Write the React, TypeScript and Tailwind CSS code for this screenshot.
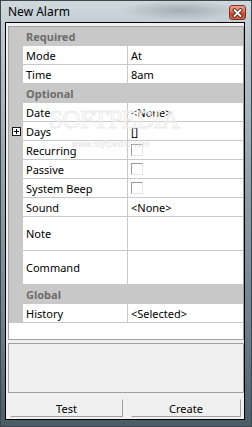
import React from "react";

function Header({ text }: { text: string }) {
  return (
    <div className="h-[19px] shrink-0 bg-[#c8c8c8] pl-[17px] flex items-center font-bold text-[#6d6d6d]">
      {text}
    </div>
  );
}

function Row({
  label,
  value,
  h = "h-[19px]",
  plus = false,
}: {
  label: string;
  value?: React.ReactNode;
  h?: string;
  plus?: boolean;
}) {
  return (
    <div className={`flex shrink-0 ${h}`}>
      <div className="w-[14px] bg-[#c8c8c8] flex items-center justify-center">
        {plus && (
          <div className="w-[9px] h-[9px] border border-[#1a1a1a] bg-white relative">
            <div className="absolute left-[1px] top-[3px] w-[5px] h-[1px] bg-black" />
            <div className="absolute left-[3px] top-[1px] w-[1px] h-[5px] bg-black" />
          </div>
        )}
      </div>
      <div className="w-[105px] border-r border-b border-[#c8c8c8] bg-white pl-[3px] flex items-center">
        {label}
      </div>
      <div className="flex-1 border-b border-[#c8c8c8] bg-white pl-[3px] flex items-center">
        {value}
      </div>
    </div>
  );
}

function Check() {
  return (
    <div className="w-[12px] h-[12px] bg-white border border-t-[#9a9a9a] border-l-[#9a9a9a] border-b-[#e6e6e6] border-r-[#e6e6e6]" />
  );
}

export default function App() {
  return (
    <div className="w-[252px] h-[427px] border border-[#3b474d] bg-[linear-gradient(180deg,#cfd8dd_0%,#bcc7ce_8%,#93a3ac_40%,#6f818b_75%,#4a5d66_100%)] flex flex-col font-['Noto_Sans',sans-serif] text-[11px] leading-[15px] text-black overflow-hidden">
      {/* Title bar */}
      <div className="h-[21px] shrink-0 flex items-start justify-between bg-[radial-gradient(ellipse_60px_10px_at_72%_45%,#a3adb3_0%,transparent_100%)]">
        <span className="ml-[7px] mt-[3px] text-[12px] leading-[16px] text-black">New Alarm</span>
        <div className="mt-[4px] mr-[5px] w-[17px] h-[15px] rounded-[3px] border border-[#7d3426] bg-[linear-gradient(180deg,#eba58f_0%,#d9735a_45%,#c4452a_55%,#d2674c_100%)] flex items-center justify-center">
          <svg width="11" height="10" viewBox="0 0 11 10">
            <path d="M2.5 2 L8.5 8 M8.5 2 L2.5 8" stroke="#4a1d14" strokeWidth="3.4" strokeLinecap="square" />
            <path d="M2.5 2 L8.5 8 M8.5 2 L2.5 8" stroke="#ffffff" strokeWidth="1.8" strokeLinecap="square" />
          </svg>
        </div>
      </div>

      {/* Client area */}
      <div className="flex-1 ml-[4px] mr-[6px] mb-[6px] border border-black bg-[#f0f0f0] flex flex-col pl-[2px] pt-[3px] pb-[2px]">
        {/* Property grid */}
        <div className="h-[314px] shrink-0 border border-[#a0a0a0] bg-white flex flex-col relative">
          <Header text="Required" />
          <Row label="Mode" value="At" />
          <Row label="Time" value="8am" />
          <Header text="Optional" />
          <Row label="Date" value="<None>" />
          <Row label="Days" value="[]" plus />
          <Row label="Recurring" value={<Check />} />
          <Row label="Passive" value={<Check />} />
          <Row label="System Beep" value={<Check />} />
          <Row label="Sound" value="<None>" />
          <Row label="Note" h="h-[34px]" />
          <Row label="Command" h="h-[34px]" />
          <Header text="Global" />
          <Row label="History" value="<Selected>" />
          <div className="flex-1 bg-white" />

          {/* watermark */}
          <div className="absolute left-[40px] top-[79px] font-['Liberation_Serif',serif] text-[25px] leading-[28px] tracking-[-0.5px] text-transparent [-webkit-text-stroke:1px_#ececec] pointer-events-none">
            SOFTPEDIA
          </div>
          <div className="absolute left-[63px] top-[111px] text-[9px] leading-[12px] italic text-[#e2e2e2] pointer-events-none">
            www.softpedia.com
          </div>
        </div>

        {/* Description pane */}
        <div className="mt-[3px] h-[50px] shrink-0 border border-[#a0a0a0] bg-[#f0f0f0]" />

        {/* Buttons */}
        <div className="mt-[6px] h-[18px] shrink-0 flex">
          <button className="ml-[2px] w-[113px] h-[18px] bg-[#f0f0f0] border border-t-[#f0f0f0] border-l-[#f0f0f0] border-r-[#a0a0a0] border-b-[#a0a0a0] flex items-center justify-center text-[11px] leading-[15px]">
            Test
          </button>
          <button className="ml-[8px] w-[110px] h-[18px] bg-[#f0f0f0] border border-t-[#f0f0f0] border-l-[#f0f0f0] border-r-[#a0a0a0] border-b-[#a0a0a0] flex items-center justify-center text-[11px] leading-[15px]">
            Create
          </button>
        </div>
      </div>
    </div>
  );
}
